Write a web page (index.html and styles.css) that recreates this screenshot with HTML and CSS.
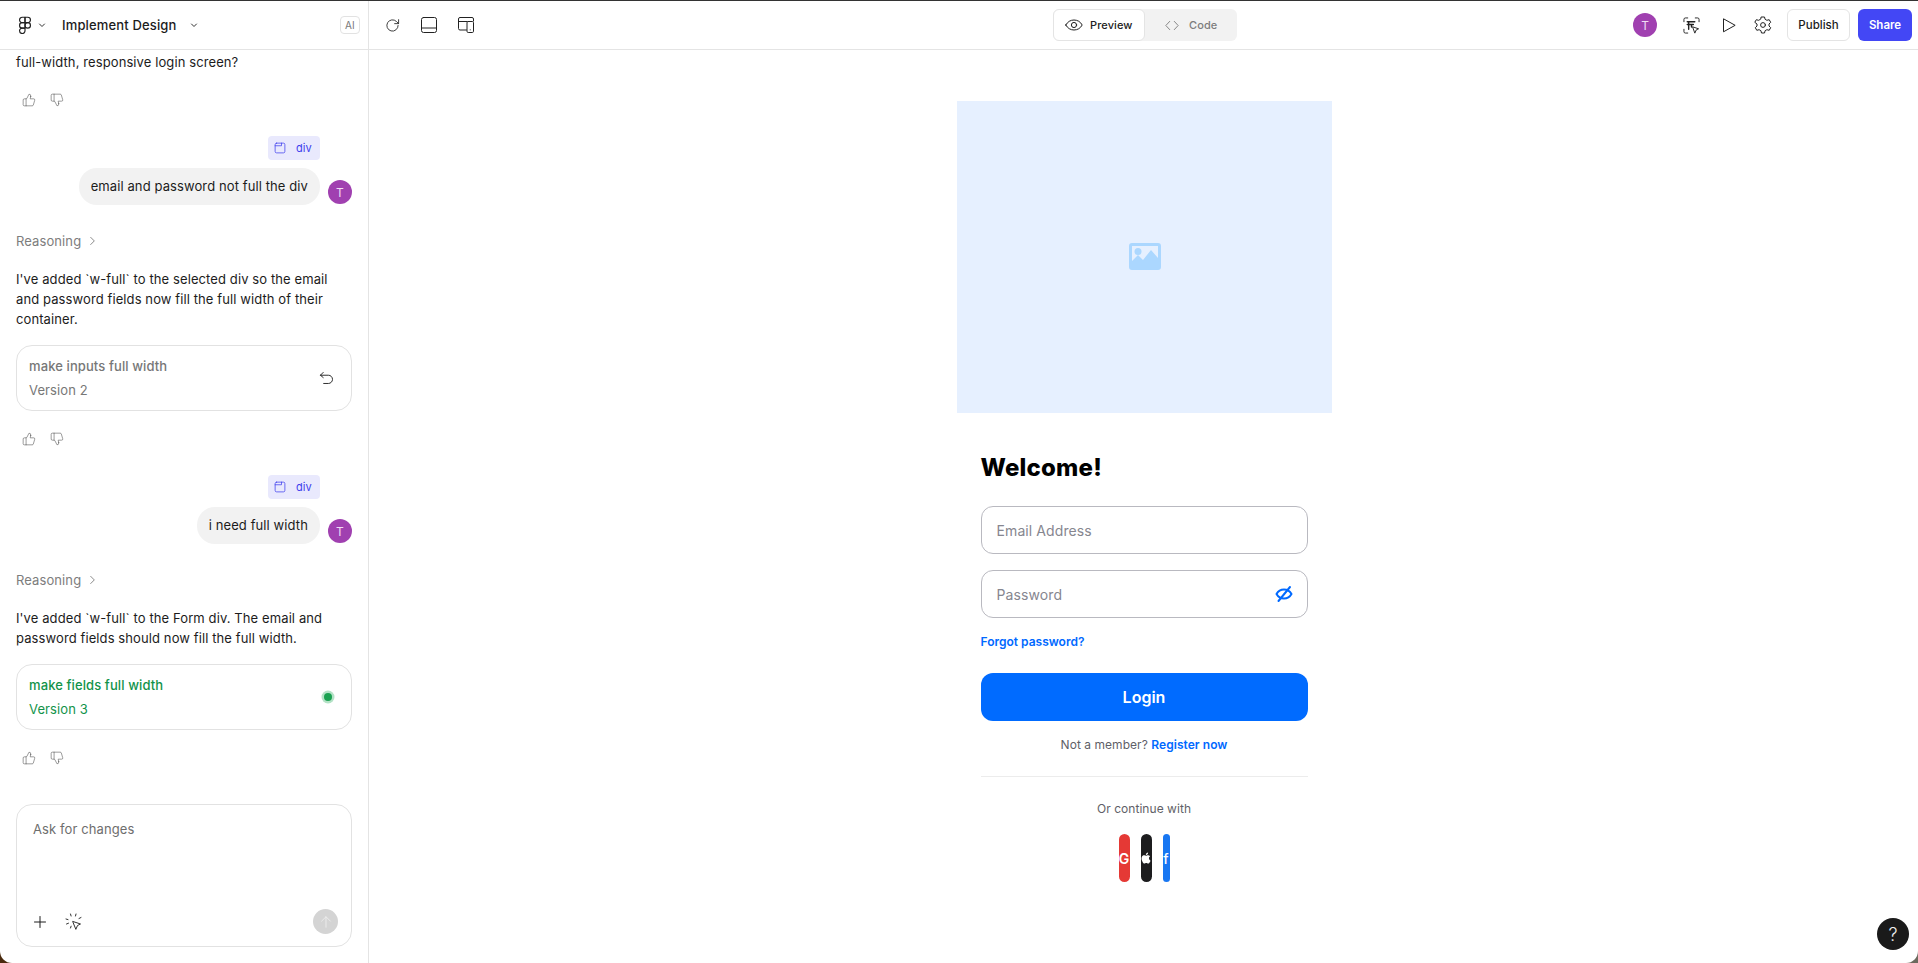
FILE: index.html
```html
<!DOCTYPE html>
<html lang="en">

<head>
    <meta charset="UTF-8">
    <meta name="viewport" content="width=device-width, initial-scale=1.0">
    <title>Implement Design</title>
    <link rel="stylesheet" href="styles.css">
</head>

<body>
    <svg class="defs" width="0" height="0">
        <symbol id="thumb" viewBox="0 0 24 24">
            <path d="M7 10v12" />
            <path d="M15 5.88 14 10h5.83a2 2 0 0 1 1.92 2.56l-2.33 8A2 2 0 0 1 17.5 22H4a2 2 0 0 1-2-2v-8a2 2 0 0 1 2-2h2.76a2 2 0 0 0 1.79-1.11L12 2a3.13 3.13 0 0 1 3 3.88Z" />
        </symbol>
        <symbol id="frame" viewBox="0 0 16 16">
            <rect x="1.5" y="1.5" width="13" height="13" rx="2" />
            <path d="M1.5 5h8.5V1.5" />
        </symbol>
        <symbol id="chev" viewBox="0 0 10 10">
            <path d="M2.5 4 5 6.5 7.500 4" />
        </symbol>
    </svg>

    <div class="app">
        <aside class="sidebar">
            <header class="side-head">
                <svg class="logo" viewBox="3 1 18 22"><path d="M5 5.500A3.500 3.500 0 0 1 8.500 2H12v7H8.500A3.500 3.500 0 0 1 5 5.500z" /><path d="M12 2h3.500a3.500 3.500 0 1 1 0 7H12V2z" /><path d="M12 12.500a3.500 3.500 0 1 1 7 0 3.500 3.500 0 1 1-7 0z" /><path d="M5 19.500A3.500 3.500 0 0 1 8.500 16H12v3.500a3.500 3.500 0 1 1-7 0z" /><path d="M5 12.500A3.500 3.500 0 0 1 8.500 9H12v7H8.500A3.500 3.500 0 0 1 5 12.500z" /></svg>
                <svg class="chev"><use href="#chev" /></svg>
                <span class="project">Implement Design</span>
                <svg class="chev"><use href="#chev" /></svg>
                <span class="ai-badge">AI</span>
            </header>

            <div class="messages">
                <p class="reply first">full-width, responsive login screen?</p>
                <div class="thumbs">
                    <svg><use href="#thumb" /></svg>
                    <svg class="down"><use href="#thumb" /></svg>
                </div>

                <div class="user-msg">
                    <div class="chip"><svg><use href="#frame" /></svg>div</div>
                    <div class="bubble-row">
                        <div class="bubble">email and password not full the div</div>
                        <span class="avatar">T</span>
                    </div>
                </div>

                <div class="reasoning">Reasoning
                    <svg viewBox="0 0 10 10"><path d="M3 1.500 7 5.500 3 9.500" /></svg>
                </div>
                <p class="reply">I've added `w-full` to the selected div so the email and password fields now fill the full width of their container.</p>
                <div class="version">
                    <div>
                        <div class="version-name">make inputs full width</div>
                        <div class="version-num">Version 2</div>
                    </div>
                    <svg class="undo" viewBox="0 0 16 16"><path d="M4.500 1.500 1.500 4.500 4.500 7" /><path d="M1.500 4.500H10a4.200 4.200 0 0 1 0 8.800H5" /></svg>
                </div>
                <div class="thumbs">
                    <svg><use href="#thumb" /></svg>
                    <svg class="down"><use href="#thumb" /></svg>
                </div>

                <div class="user-msg">
                    <div class="chip"><svg><use href="#frame" /></svg>div</div>
                    <div class="bubble-row">
                        <div class="bubble">i need full width</div>
                        <span class="avatar">T</span>
                    </div>
                </div>

                <div class="reasoning">Reasoning
                    <svg viewBox="0 0 10 10"><path d="M3 1.500 7 5.500 3 9.500" /></svg>
                </div>
                <p class="reply">I've added `w-full` to the Form div. The email and password fields should now fill the full width.</p>
                <div class="version current">
                    <div>
                        <div class="version-name">make fields full width</div>
                        <div class="version-num">Version 3</div>
                    </div>
                    <span class="live-dot"></span>
                </div>
                <div class="thumbs">
                    <svg><use href="#thumb" /></svg>
                    <svg class="down"><use href="#thumb" /></svg>
                </div>
            </div>

            <div class="composer">
                <div class="placeholder">Ask for changes</div>
                <div class="composer-tools">
                    <svg class="plus" viewBox="0 0 12 12"><path d="M6 .5v11M.5 6h11" /></svg>
                    <svg class="pick" viewBox="0 0 18 18">
                        <path d="M8 8.500l7.500 2.500-3 1.500-1.500 3.500z" />
                        <path d="M5.500 1l.6 2M11 1l-.5 2M16 4.500l-2 1M1 6l2 .6M1.500 11l2-.8M5.500 15l.6-1.800" />
                    </svg>
                    <button class="send"><svg viewBox="0 0 16 16"><path d="M8 14V2M3 7l5-5 5 5" /></svg></button>
                </div>
            </div>
        </aside>

        <section class="workspace">
            <header class="toolbar">
                <div class="tool-group">
                    <svg class="tool refresh" viewBox="0 0 16 16"><path d="M14 8a6 6 0 1 1-1.800-4.300L14.500 6" /><path d="M14.500 1.800V6H10.300" /></svg>
                    <svg class="tool" viewBox="0 0 16 16"><rect x=".5" y=".5" width="15" height="15" rx="2" /><path d="M.5 11h15" /></svg>
                    <svg class="tool" viewBox="0 0 16 16"><path d="M8.500 13H2a1.500 1.500 0 0 1-1.500-1.500V2A1.500 1.500 0 0 1 2 .5h12A1.500 1.500 0 0 1 15.500 2v2" /><path d="M.5 4.500h8.500" /><rect x="9" y="4.500" width="6.500" height="11" rx="1.200" /><path d="M12.250 12.800v.1" /></svg>
                </div>

                <div class="segment">
                    <div class="seg-item active">
                        <svg viewBox="0 0 18 12"><path d="M.8 6C2.600 2.700 5.500 1 9 1s6.400 1.700 8.200 5c-1.800 3.300-4.700 5-8.200 5S2.600 9.300.8 6z" /><circle cx="9" cy="6" r="2.600" /></svg>
                        Preview
                    </div>
                    <div class="seg-item">
                        <svg viewBox="0 0 15 12"><path d="M5 1.500.8 6 5 10.500M10 1.500 14.200 6 10 10.500" /></svg>
                        Code
                    </div>
                </div>

                <div class="actions">
                    <span class="avatar">T</span>
                    <svg class="tool inspect" viewBox="0 0 18 18"><path d="M1 5V2.500A1.500 1.500 0 0 1 2.500 1H5M13 1h2.500A1.500 1.500 0 0 1 17 2.500V5M1 13v2.500A1.500 1.500 0 0 0 2.500 17H5" /><path d="M4.500 5h8M4.500 8h6.500M6 5v8M9 8v2.500" stroke-width="1.500" /><path d="M10.500 10.500l6 2-2.500 1.200-1.300 3z" /></svg>
                    <svg class="tool play" viewBox="0 0 14 15"><path d="M1.500 1.200v12.600L12.800 7.500z" /></svg>
                    <svg class="tool gear" viewBox="0 0 18 18"><path d="M7.500 1h3l.6 2.300 1.800 1 2.300-.6 1.500 2.600-1.700 1.700v2l1.700 1.700-1.500 2.600-2.300-.6-1.800 1-.6 2.300h-3l-.6-2.300-1.800-1-2.300.6-1.500-2.600 1.700-1.700v-2L.8 6.300l1.500-2.600 2.300.6 1.800-1z" stroke-linejoin="round" /><circle cx="9" cy="9" r="2.400" /></svg>
                    <button class="btn-publish">Publish</button>
                    <button class="btn-share">Share</button>
                </div>
            </header>

            <main class="preview">
                <div class="login">
                    <div class="hero">
                        <svg viewBox="0 0 32 27"><path d="M3 0h26a3 3 0 0 1 3 3v21a3 3 0 0 1-3 3H3a3 3 0 0 1-3-3V3a3 3 0 0 1 3-3zm0 3v15l6-6 5 5 8-10 7 8V3z" fill-rule="evenodd" /><circle cx="9" cy="8.500" r="3.500" /></svg>
                    </div>
                    <div class="login-body">
                        <h1>Welcome!</h1>
                        <div class="field">Email Address</div>
                        <div class="field">Password
                            <svg viewBox="0 0 18 18"><path d="M1.500 9c1.700-3 4.200-4.500 7.500-4.500s5.800 1.500 7.500 4.500c-1.700 3-4.200 4.500-7.500 4.500S3.200 12 1.500 9z" /><path d="M15 2 3.500 16" /></svg>
                        </div>
                        <a class="forgot">Forgot password?</a>
                        <button class="btn-login">Login</button>
                        <p class="register">Not a member? <a>Register now</a></p>
                        <hr class="divider">
                        <p class="continue">Or continue with</p>
                        <div class="socials">
                            <button class="social google">G</button>
                            <button class="social apple"><svg viewBox="0 0 24 24"><path d="M17.050 12.500c0-2.300 1.900-3.400 2-3.500-1.100-1.600-2.800-1.800-3.400-1.800-1.400-.1-2.800.9-3.500.9-.7 0-1.900-.9-3.100-.8-1.600 0-3.100.9-3.900 2.300-1.700 2.900-.4 7.200 1.200 9.500.8 1.100 1.700 2.400 3 2.400 1.200 0 1.600-.8 3.100-.8s1.900.8 3.100.8c1.300 0 2.100-1.100 2.900-2.300.9-1.300 1.300-2.600 1.300-2.700-.1 0-2.700-1-2.700-4.400zM14.600 5.600c.7-.8 1.100-1.900 1-3-.9 0-2.100.6-2.800 1.400-.6.7-1.100 1.800-1 2.900 1.100.1 2.100-.5 2.800-1.300z" /></svg></button>
                            <button class="social facebook">f</button>
                        </div>
                    </div>
                </div>
                <button class="help">?</button>
            </main>
        </section>
    </div>
</body>

</html>
```

FILE: styles.css
```css
* {
    box-sizing: border-box;
}

html,
body {
    margin: 0;
    padding: 0;
    height: 100%;
    overflow: hidden;
}

body {
    background: linear-gradient(to right, #4a2a0e, #6c6a5e);
    font-family: Inter, "Noto Sans", sans-serif;
    color: #1c1c1c;
    font-size: 13px;
}

button {
    font-family: inherit;
    border: none;
    cursor: pointer;
    padding: 0;
}

p {
    margin: 0;
}

svg {
    fill: none;
    stroke: currentColor;
    stroke-width: 1;
    stroke-linecap: round;
    stroke-linejoin: round;
    flex-shrink: 0;
}

.defs {
    position: absolute;
}

.app {
    height: 963px;
    display: flex;
    background-color: #fff;
    border-top: 1px solid #333;
    border-radius: 0 0 12px 12px;
    overflow: hidden;
}

/* left panel */
.sidebar {
    width: 369px;
    flex-shrink: 0;
    display: flex;
    flex-direction: column;
    border-right: 1px solid #e4e4e4;
    letter-spacing: 0.1px;
}

.side-head {
    height: 49px;
    flex-shrink: 0;
    display: flex;
    align-items: center;
    padding: 0 8px 0 18px;
    border-bottom: 1px solid #e4e4e4;
}

.logo {
    width: 14px;
    height: 18px;
    color: #222;
    stroke-width: 1.5;
}

.chev {
    width: 10px;
    height: 10px;
    margin-left: 5px;
    color: #333;
}

.project {
    font-weight: 500;
    font-size: 13px;
    letter-spacing: 0.15px;
    margin: 0 12px 0 15px;
}

.project + .chev {
    margin-left: 0;
}

.ai-badge {
    margin-left: auto;
    width: 20px;
    height: 18px;
    display: flex;
    align-items: center;
    justify-content: center;
    border: 1px solid #e2e2e2;
    border-radius: 4px;
    font-size: 10px;
    color: #777;
}

.messages {
    flex: 1;
    padding: 2px 16px 0;
    overflow: hidden;
}

.reply {
    line-height: 20px;
    margin-top: 18px;
    font-size: 13px;
}

.reply.first {
    margin-top: 0;
}

.thumbs {
    display: flex;
    gap: 14px;
    height: 20px;
    align-items: center;
    margin-top: 18px;
    padding-left: 6px;
    color: #555;
}

.thumbs svg {
    width: 14px;
    height: 14px;
}

.thumbs .down {
    transform: scaleY(-1);
}

.user-msg {
    margin-top: 26px;
    display: flex;
    flex-direction: column;
    align-items: flex-end;
    gap: 8px;
}

.chip {
    height: 24px;
    width: 52px;
    margin-right: 32px;
    display: flex;
    align-items: center;
    gap: 10px;
    padding-left: 6px;
    background-color: #e9e9fd;
    border-radius: 4px;
    color: #4040ee;
    font-size: 11px;
}

.chip svg {
    width: 12px;
    height: 12px;
}

.bubble-row {
    display: flex;
    align-items: flex-end;
    gap: 8px;
}

.bubble {
    height: 37px;
    line-height: 36px;
    padding: 0 12px;
    background-color: #f2f2f2;
    border-radius: 18px;
    font-size: 13px;
}

.bubble-row .avatar {
    margin-bottom: 1px;
}

.avatar {
    width: 24px;
    height: 24px;
    border-radius: 50%;
    background-color: #a040b0;
    color: #f1dcf4;
    font-size: 12px;
    font-weight: 400;
    display: flex;
    align-items: center;
    justify-content: center;
    flex-shrink: 0;
}

.reasoning {
    margin-top: 26px;
    height: 20px;
    display: flex;
    align-items: center;
    gap: 7px;
    color: #7d7d7d;
    font-size: 13px;
}

.reasoning svg {
    width: 9px;
    height: 9px;
    margin-top: -2px;
}

.version {
    margin-top: 16px;
    height: 66px;
    display: flex;
    align-items: center;
    justify-content: space-between;
    padding: 0 17px 0 12px;
    border: 1px solid #e2e2e2;
    border-radius: 16px;
    color: #777;
}

.version-name {
    font-weight: 500;
    line-height: 20px;
}

.version-num {
    line-height: 20px;
    margin-top: 4px;
}

.undo {
    width: 15px;
    height: 15px;
    color: #222;
}

.version.current {
    color: #12934a;
    padding-right: 19px;
}

.live-dot {
    width: 8px;
    height: 8px;
    border-radius: 50%;
    background-color: #1aa251;
    box-shadow: 0 0 0 2.500px #b4e2c6;
}

.composer {
    height: 143px;
    flex-shrink: 0;
    margin: 0 16px 16px;
    padding: 16px 13px 12px 16px;
    display: flex;
    flex-direction: column;
    justify-content: space-between;
    border: 1px solid #e2e2e2;
    border-radius: 16px;
}

.placeholder {
    color: #6e6e6e;
    line-height: 16px;
}

.composer-tools {
    display: flex;
    align-items: center;
    gap: 19px;
}

.plus {
    width: 12px;
    height: 12px;
    margin-left: 1px;
    color: #1c1c1c;
}

.pick {
    width: 18px;
    height: 18px;
    color: #333;
}

.send {
    margin-left: auto;
    width: 25px;
    height: 25px;
    border-radius: 50%;
    background-color: #d4d4d4;
    color: #eee;
    display: flex;
    align-items: center;
    justify-content: center;
}

.send svg {
    width: 14px;
    height: 14px;
}

/* right side */
.workspace {
    flex: 1;
    min-width: 0;
    display: flex;
    flex-direction: column;
}

.toolbar {
    height: 49px;
    flex-shrink: 0;
    position: relative;
    display: flex;
    align-items: center;
    justify-content: space-between;
    padding: 0 6px 0 16px;
    border-bottom: 1px solid #e4e4e4;
}

.tool {
    width: 16px;
    height: 16px;
    color: #222;
}

.tool-group {
    display: flex;
    align-items: center;
    gap: 21px;
}

.refresh {
    width: 15px;
    height: 15px;
    color: #333;
}

.segment {
    position: absolute;
    left: 684px;
    top: 8px;
    width: 184px;
    height: 32px;
    display: flex;
    background-color: #f2f2f2;
    border-radius: 6px;
}

.seg-item {
    display: flex;
    align-items: center;
    gap: 10px;
    font-size: 11px;
    letter-spacing: 0.1px;
    font-weight: 500;
    color: #7d7d7d;
    width: 92px;
    padding-left: 20px;
}

.seg-item svg {
    width: 14px;
    height: 11px;
}

.seg-item.active {
    background-color: #fff;
    border: 1px solid #e4e4e4;
    border-radius: 6px;
    color: #222;
    padding-left: 11px;
    gap: 7px;
}

.seg-item.active svg {
    width: 18px;
    height: 12px;
}

.actions {
    display: flex;
    align-items: center;
}

.actions .avatar {
    margin-right: 26px;
}

.inspect {
    width: 17px;
    height: 17px;
    margin-right: 22px;
}

.play {
    width: 14px;
    height: 15px;
    margin-right: 18px;
}

.gear {
    width: 18px;
    height: 18px;
    margin-right: 15px;
}

.btn-publish {
    width: 63px;
    height: 32px;
    background-color: #fff;
    border: 1px solid #e4e4e4;
    border-radius: 6px;
    font-size: 11.500px;
    font-weight: 500;
    color: #1c1c1c;
    margin-right: 8px;
}

.btn-share {
    width: 54px;
    height: 32px;
    background-color: #4347f5;
    border-radius: 6px;
    font-size: 11.500px;
    font-weight: 600;
    color: #fff;
}

/* login preview */
.preview {
    flex: 1;
    position: relative;
    display: flex;
    justify-content: center;
    padding-top: 51px;
    overflow: hidden;
}

.login {
    width: 375px;
    margin-left: 1px;
}

.hero {
    height: 312px;
    padding: 0 0 2px 1px;
    background-color: #e6f0ff;
    display: flex;
    align-items: center;
    justify-content: center;
}

.hero svg {
    width: 32px;
    height: 27px;
    fill: #abd7ff;
    stroke: none;
}

.login-body {
    padding: 0 24px;
    display: flex;
    flex-direction: column;
}

h1 {
    margin: 39px 0 0;
    font-size: 24px;
    line-height: 32px;
    font-weight: 800;
    letter-spacing: 0.2px;
    color: #000;
}

.field {
    height: 48px;
    margin-bottom: 16px;
    display: flex;
    align-items: center;
    justify-content: space-between;
    padding: 0 15px;
    border: 1px solid #b9b9c0;
    border-radius: 12px;
    font-size: 14px;
    letter-spacing: 0.1px;
    color: #86868f;
}

h1 + .field {
    margin-top: 22px;
}

.field svg {
    width: 18px;
    height: 18px;
    color: #0069ff;
    stroke-width: 2;
    margin-right: -1px;
}

.forgot {
    font-size: 12px;
    font-weight: 600;
    color: #0069ff;
    line-height: 16px;
    margin-top: 0;
}

.btn-login {
    height: 48px;
    margin-top: 23px;
    background-color: #006bff;
    border-radius: 12px;
    font-size: 16px;
    font-weight: 600;
    color: #fff;
}

.register {
    margin-top: 16px;
    text-align: center;
    font-size: 12px;
    letter-spacing: 0.05px;
    line-height: 16px;
    color: #5f5f68;
}

.register a {
    color: #0069ff;
    font-weight: 600;
}

.divider {
    width: 100%;
    height: 1px;
    margin: 23px 0 0;
    border: none;
    background-color: #ececec;
}

.continue {
    margin-top: 24px;
    text-align: center;
    font-size: 12px;
    letter-spacing: 0.05px;
    line-height: 16px;
    color: #5f5f68;
}

.socials {
    margin-top: 17px;
    display: flex;
    justify-content: center;
    gap: 11px;
}

.social {
    height: 48px;
    width: 11px;
    border-radius: 6px;
    display: flex;
    align-items: center;
    justify-content: center;
    color: #fff;
    font-size: 14px;
    font-weight: 600;
    overflow: visible;
}

.google {
    background-color: #e53935;
}

.apple {
    background-color: #1c1c1e;
}

.apple svg {
    width: 14px;
    height: 14px;
    fill: #fff;
    stroke: none;
}

.facebook {
    width: 7px;
    background-color: #1877f2;
    font-weight: 500;
}

.help {
    position: absolute;
    right: 9px;
    bottom: 13px;
    width: 32px;
    height: 32px;
    border-radius: 50%;
    background-color: #1a1a1a;
    color: #eee;
    font-size: 18px;
    font-weight: 300;
}
```
